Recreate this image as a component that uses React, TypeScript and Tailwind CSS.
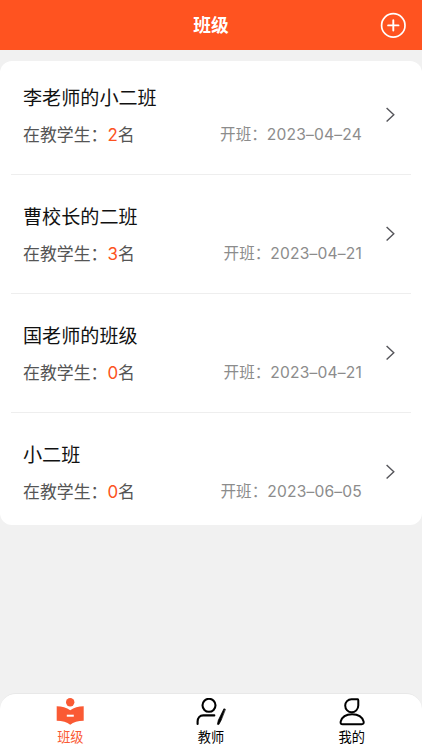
type ClassItem = {
  name: string;
  students: number;
  startDate: string;
};

const classes: ClassItem[] = [
  { name: "李老师的小二班", students: 2, startDate: "2023–04–24" },
  { name: "曹校长的二班", students: 3, startDate: "2023–04–21" },
  { name: "国老师的班级", students: 0, startDate: "2023–04–21" },
  { name: "小二班", students: 0, startDate: "2023–06–05" },
];

function PlusCircle() {
  return (
    <svg className="h-[26px] w-[26px]" viewBox="0 0 26 26" fill="none" stroke="#fff" strokeLinecap="round">
      <circle cx="13.3" cy="13.4" r="11.7" strokeWidth="1.7" />
      <path d="M13.3 8.2v10.4M8.1 13.4h10.4" strokeWidth="1.9" />
    </svg>
  );
}

function Chevron() {
  return (
    <svg className="h-4 w-2.5" viewBox="0 0 10 16" fill="none" stroke="#55555a" strokeWidth="1.4">
      <path d="M1.6 .9 8.8 7.8l-7.2 6.8" />
    </svg>
  );
}

function BookIcon() {
  return (
    <svg className="h-7 w-7" viewBox="0 0 28 28" fill="#fa5a34">
      <circle cx="14.2" cy="4.2" r="4.2" />
      <path d="M.7 8.3C6 8.3 10.5 9.6 14.2 12.2 18 9.6 22.3 8.3 27.7 8.3V22.7C22 22.7 17.5 24 14.2 26.8 11 24 6.5 22.700.7 22.700Z" />
      <path d="M10.8 17.7h7" stroke="#fff" strokeWidth="2" />
    </svg>
  );
}

function TeacherIcon() {
  return (
    <svg className="h-7 w-[30px]" viewBox="0 0 30 28" fill="none" stroke="#000" strokeWidth="2.1" strokeLinecap="round">
      <circle cx="13" cy="7.3" r="6.5" />
      <path d="M1.6 26v-2.400c0-3.600 2.100-6.200 5.700-6.200h11" />
      <path d="M29.1 11.200 27.900 10.800 22.300 22.300 21.400 26.300 22.800 26.600 24.900 22.800Z" fill="#000" strokeWidth=".7" strokeLinejoin="round" />
    </svg>
  );
}

function UserIcon() {
  return (
    <svg className="h-7 w-7" viewBox="0 0 28 28" fill="none" stroke="#000" strokeWidth="2" strokeLinejoin="round">
      <path d="M19.7 1.2h-6.2a6.300 6.300 0 0 0-6.3 6.4c0 3.900 3 6.700 6.500 6.700s6.600-3 6.600-6.700V2.400c0-.8-.1-1.200-.6-1.200Z" />
      <path d="M14.100 16.200c-6.300 0-10.200 2.800-11.400 7.300-.4 1.900.3 2.700 2 2.700h19c1.700 0 2.300-.9 1.900-2.700-1.300-4.600-5.200-7.300-11.500-7.300Z" />
    </svg>
  );
}

const tabs = [
  { label: "班级", icon: <BookIcon />, color: "text-[#fa5a34]" },
  { label: "教师", icon: <TeacherIcon />, color: "text-black" },
  { label: "我的", icon: <UserIcon />, color: "text-black" },
];

function ClassRow({ item }: { item: ClassItem }) {
  return (
    <li className="border-b border-[#eeeeee] py-1.5 first:pt-0 last:border-0 last:pb-0">
      <div className="flex h-[106.2px] items-center pl-3 pr-4">
        <div className="flex-1 pt-[3px]">
          <h2 className="text-[19.1px] leading-7 text-[#111]">{item.name}</h2>
          <div className="mt-[9px] flex items-center justify-between leading-7">
            <p className="text-[16.9px] text-[#555]">
              在教学生：<span className="text-[#fc5220]">{item.students}</span>名
            </p>
            <p className="text-[15.6px] text-[#8c8c8c]">
              开班：<span className="tracking-[0.18px]">{item.startDate}</span>
            </p>
          </div>
        </div>
        <div className="ml-[23px]">
          <Chevron />
        </div>
      </div>
    </li>
  );
}

export default function App() {
  return (
    <div className="flex h-[750px] w-[422px] flex-col overflow-hidden bg-[#f1f1f1] font-['Inter','Noto_Sans_CJK_SC',sans-serif]">
      <header className="grid h-[50px] shrink-0 grid-cols-3 items-center bg-[#ff5320] px-4">
        <h1 className="col-start-2 pt-[3px] text-center text-[17.7px] font-bold text-white">班级</h1>
        <button className="justify-self-end">
          <PlusCircle />
        </button>
      </header>

      <main className="flex-1 pt-[11px]">
        <ul className="rounded-[12px] bg-white px-[11px] pt-[0.6px]">
          {classes.map((item) => (
            <ClassRow key={item.name} item={item} />
          ))}
        </ul>
      </main>

      <nav className="grid h-[57px] shrink-0 grid-cols-3 rounded-t-[16px] border-t border-[#e8e8e8] bg-white pt-1">
        {tabs.map((tab) => (
          <button key={tab.label} className={`flex flex-col items-center ${tab.color}`}>
            {tab.icon}
            <span className="mt-px text-[13.2px] leading-5">{tab.label}</span>
          </button>
        ))}
      </nav>
    </div>
  );
}
